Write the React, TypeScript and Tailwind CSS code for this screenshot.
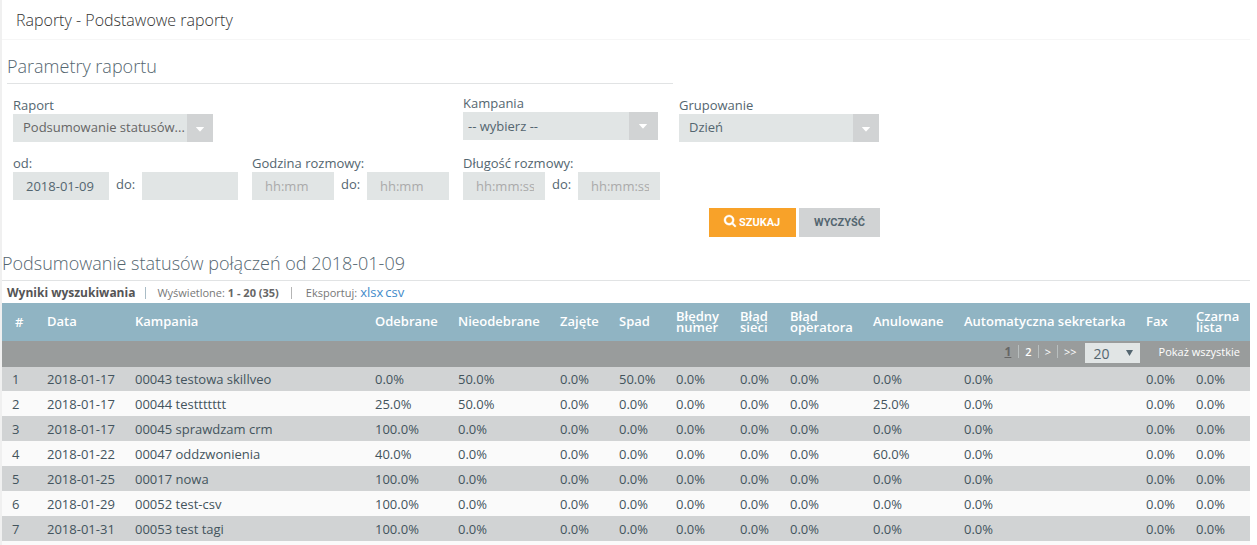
import type { ReactNode } from "react";

interface Column {
  label: string;
  width: string;
}

interface Row {
  date: string;
  campaign: string;
  values: string[];
}

const columns: Column[] = [
  { label: "#", width: "w-[35px]" },
  { label: "Data", width: "w-[88px]" },
  { label: "Kampania", width: "w-[240px]" },
  { label: "Odebrane", width: "w-[83px]" },
  { label: "Nieodebrane", width: "w-[102px]" },
  { label: "Zajęte", width: "w-[59px]" },
  { label: "Spad", width: "w-[57px]" },
  { label: "Błędny numer", width: "w-[64px]" },
  { label: "Błąd sieci", width: "w-[50px]" },
  { label: "Błąd operatora", width: "w-[83px]" },
  { label: "Anulowane", width: "w-[91px]" },
  { label: "Automatyczna sekretarka", width: "w-[182px]" },
  { label: "Fax", width: "w-[50px]" },
  { label: "Czarna lista", width: "w-[64px]" },
];

const Z = "0.0%";

const rows: Row[] = [
  { date: "2018-01-17", campaign: "00043 testowa skillveo", values: [Z, "50.0%", Z, "50.0%", Z, Z, Z, Z, Z, Z, Z] },
  { date: "2018-01-17", campaign: "00044 testtttttt", values: ["25.0%", "50.0%", Z, Z, Z, Z, Z, "25.0%", Z, Z, Z] },
  { date: "2018-01-17", campaign: "00045 sprawdzam crm", values: ["100.0%", Z, Z, Z, Z, Z, Z, Z, Z, Z, Z] },
  { date: "2018-01-22", campaign: "00047 oddzwonienia", values: ["40.0%", Z, Z, Z, Z, Z, Z, "60.0%", Z, Z, Z] },
  { date: "2018-01-25", campaign: "00017 nowa", values: ["100.0%", Z, Z, Z, Z, Z, Z, Z, Z, Z, Z] },
  { date: "2018-01-29", campaign: "00052 test-csv", values: ["100.0%", Z, Z, Z, Z, Z, Z, Z, Z, Z, Z] },
  { date: "2018-01-31", campaign: "00053 test tagi", values: ["100.0%", Z, Z, Z, Z, Z, Z, Z, Z, Z, Z] },
];

const Field = ({ label, className, children }: { label: string; className: string; children: ReactNode }) => (
  <div className={className}>
    <div className="h-[18px] leading-[18px] whitespace-nowrap">{label}</div>
    {children}
  </div>
);

const Select = ({ value, textClass, arrowClass }: { value: string; textClass: string; arrowClass: string }) => (
  <div className="flex h-7 bg-[#e1e5e5]">
    <div className={`min-w-0 flex-1 leading-[27px] whitespace-nowrap ${textClass}`}>{value}</div>
    <div className={`flex justify-center bg-[#d1d3d4] ${arrowClass}`}>
      <svg width="8" height="5" viewBox="0 0 8 5" fill="#fff">
        <path d="M.5 0h7q.5 0 .3.6L4.4 4.2q-.4.4-.8 0L.2.6Q0 0 .5 0z" />
      </svg>
    </div>
  </div>
);

const SearchIcon = () => (
  <svg
    width="12"
    height="12"
    viewBox="0 128 1664 1664"
    fill="currentColor"
    stroke="currentColor"
    strokeWidth="50"
    className="overflow-visible"
  >
    <path d="M1152 832q0-185-131.5-316.5t-316.5-131.5-316.5 131.5-131.5 316.5 131.5 316.5 316.5 131.5 316.5-131.5 131.5-316.5zm512 832q0 52-38 90t-90 38q-54 0-90-38l-343-342q-179 124-399 124-143 0-273.5-55.5t-225-150-150-225-55.5-273.5 55.5-273.5 150-225 225-150 273.5-55.5 273.5 55.5 225 150 150 225 55.5 273.5q0 220-124 399l343 343q37 37 37 90z" />
  </svg>
);

const Range = ({ width, placeholder, value }: { width: string; placeholder?: string; value?: string }) => (
  <div className="flex">
    <input
      className={`h-7 bg-[#e1e5e5] pr-[11px] pl-[13px] outline-none placeholder:text-[#aaaaaa] ${width}`}
      placeholder={placeholder}
      defaultValue={value}
    />
    <span className="w-[33px] pl-[7px] leading-[25px]">do:</span>
    <input
      className={`h-7 bg-[#e1e5e5] pr-[11px] pl-[13px] outline-none placeholder:text-[#aaaaaa] ${width}`}
      placeholder={placeholder}
    />
  </div>
);

const SearchForm = () => (
  <div className="text-[13px] text-[#546670]">
    <h2 className="ml-[5px] h-11 w-[666px] border-b border-[#e1e3e4] pt-3 text-[18px] leading-7 font-light">
      Parametry raportu
    </h2>
    <div className="flex h-[70px] items-start pt-2.5 pl-[11px]">
      <Field label="Raport" className="mt-0.5 w-[200px]">
        <Select value="Podsumowanie statusów..." textClass="pl-2.5 text-[#666]" arrowClass="w-[26px] pt-[13px]" />
      </Field>
      <Field label="Kampania" className="ml-[250px] w-[195px]">
        <Select value="-- wybierz --" textClass="pl-[5px] pt-px" arrowClass="w-[29px] pt-3 pr-px" />
      </Field>
      <Field label="Grupowanie" className="mt-0.5 ml-[21px] w-[200px]">
        <Select value="Dzień" textClass="pl-2.5" arrowClass="w-[26px] pt-[13px]" />
      </Field>
    </div>
    <div className="flex h-[54px] gap-[14px] pl-[11px]">
      <Field label="od:" className="w-[225px]">
        <Range width="w-24" value="2018-01-09" />
      </Field>
      <Field label="Godzina rozmowy:" className="w-[197px]">
        <Range width="w-[82px]" placeholder="hh:mm" />
      </Field>
      <Field label="Długość rozmowy:" className="w-[197px]">
        <Range width="w-[82px]" placeholder="hh:mm:ss" />
      </Field>
    </div>
    <div className="flex gap-[3px] pl-[707px] font-['Roboto','Liberation_Sans',sans-serif] text-[11px] font-bold">
      <button className="flex h-[29px] w-[87px] items-start gap-[3px] bg-[#f8a229] pt-[7px] pl-[15px] text-white">
        <SearchIcon />
        <span className="leading-[15px]">SZUKAJ</span>
      </button>
      <button className="h-[29px] w-[81px] bg-[#d1d3d4] pt-px">WYCZYŚĆ</button>
    </div>
  </div>
);

const Pager = () => (
  <div className="flex h-[26px] items-start justify-end pr-2.5 text-[11px] leading-[22px] text-white">
    <b className="text-[12px] text-[#666] underline">1</b>
    <i className="mr-[6px] ml-[7px] mt-1 h-[13px] w-px bg-[#b9bfbf]" />
    <b className="font-semibold">2</b>
    <i className="mx-[6px] mt-1 h-[13px] w-px bg-[#b9bfbf]" />
    <span>&gt;</span>
    <i className="mx-[6px] mt-1 h-[13px] w-px bg-[#b9bfbf]" />
    <span>&gt;&gt;</span>
    <div className="mt-0.5 ml-2 flex h-5 w-[55px] justify-between bg-[#e1e5e5] pr-[7px] pl-[9px] text-[14px] leading-[22px] text-[#546670]">
      20
      <svg className="mt-[7px]" width="7" height="6" viewBox="0 0 7 6" fill="#546670">
        <path d="M0 0h7L3.5 6z" />
      </svg>
    </div>
    <span className="ml-[19px]">Pokaż wszystkie</span>
  </div>
);

const ResultsTable = () => (
  <table className="w-[1248px] table-fixed border-collapse text-left text-[13px] text-[#43545d]">
    <colgroup>
      {columns.map((column) => (
        <col key={column.label} className={column.width} />
      ))}
    </colgroup>
    <thead>
      <tr className="h-[38px] bg-[#90b4c3] text-white">
        {columns.map((column, i) => (
          <th
            key={column.label}
            className={`pr-0 leading-[11px] font-semibold ${i === 0 ? "pt-px pb-0 pl-[13px]" : "pt-0 pb-px pl-2.5"}`}
          >
            {column.label}
          </th>
        ))}
      </tr>
    </thead>
    <tbody>
      <tr className="bg-[#999c9c]">
        <td colSpan={columns.length} className="p-0">
          <Pager />
        </td>
      </tr>
      {rows.map((row, i) => (
        <tr
          key={row.campaign}
          className={`${i === 0 ? "h-6" : "h-[25px]"} ${i % 2 === 0 ? "bg-[#d1d3d4]" : "bg-[#fafafa]"}`}
        >
          <td className="py-0 pl-2.5 leading-6">{i + 1}</td>
          <td className="py-0 pl-2.5 leading-6">{row.date}</td>
          <td className="py-0 pl-2.5 leading-6">{row.campaign}</td>
          {row.values.map((value, j) => (
            <td key={j} className="py-0 pl-2.5 leading-6">
              {value}
            </td>
          ))}
        </tr>
      ))}
      <tr className="h-1 bg-[#fafafa]">
        <td colSpan={columns.length} className="p-0" />
      </tr>
    </tbody>
  </table>
);

export default function App() {
  return (
    <div className="h-[545px] w-full overflow-hidden border-l-2 border-[#f0f0f0] bg-white font-['Open_Sans','Noto_Sans',sans-serif]">
      <header className="h-10 w-[1248px] border-b border-[#f6f6f6] pl-[14px] text-[16px] leading-10 font-light text-[#333]">
        Raporty - Podstawowe raporty
      </header>
      <SearchForm />
      <h2 className="h-11 w-[1248px] border-b border-[#e1e3e4] pt-3 text-[18px] leading-7 font-light text-[#546670]">
        Podsumowanie statusów połączeń od 2018-01-09
      </h2>
      <div className="flex h-[22px] items-center pt-0.5 pl-[5px] text-[11px] text-[#777]">
        <b className="text-[12px] text-[#555]">Wyniki wyszukiwania</b>
        <i className="mr-[11px] ml-2.5 h-3 w-px bg-[#a9bcc6]" />
        <span>
          Wyświetlone: <b className="text-[#666]">1 - 20 (35)</b>
        </span>
        <i className="mr-[14px] ml-3 h-3 w-px bg-[#b5b5b5]" />
        <span>Eksportuj:</span>
        <a className="ml-[3px] text-[13px] text-[#428bca]">xlsx</a>
        <a className="ml-0.5 text-[13px] text-[#428bca]">csv</a>
      </div>
      <ResultsTable />
    </div>
  );
}
